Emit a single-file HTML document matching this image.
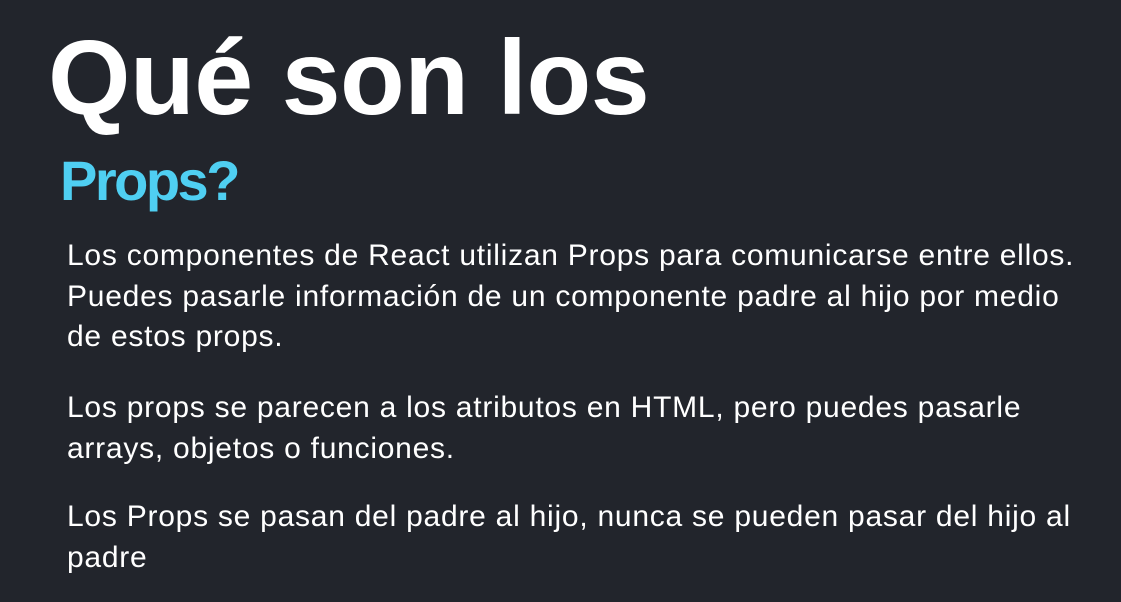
<!DOCTYPE html>
<html><head><meta charset="utf-8"><style>
html,body{margin:0;padding:0;background:#22252c;width:1121px;height:602px;overflow:hidden;font-family:"Liberation Sans",sans-serif;}
.t{position:absolute;left:48px;top:18px;font-size:106px;font-weight:bold;color:#fff;letter-spacing:-0.5px;line-height:120px;white-space:nowrap;}
.p{position:absolute;left:60px;top:146px;font-size:56px;font-weight:bold;color:#4fcff2;line-height:70px;letter-spacing:-2.5px;}
.b{position:absolute;left:67px;font-size:30px;color:#fff;line-height:40.5px;width:1060px;letter-spacing:0.75px;white-space:nowrap;}
</style></head><body>
<div class="t">Qué son los</div>
<div class="p">Props?</div>
<div class="b" style="top:236px">Los componentes de React utilizan Props para comunicarse entre ellos.<br>Puedes pasarle información de un componente padre al hijo por medio<br>de estos props.</div>
<div class="b" style="top:388px">Los props se parecen a los atributos en HTML, pero puedes pasarle<br>arrays, objetos o funciones.</div>
<div class="b" style="top:497px">Los Props se pasan del padre al hijo, nunca se pueden pasar del hijo al<br>padre</div>
</body></html>
